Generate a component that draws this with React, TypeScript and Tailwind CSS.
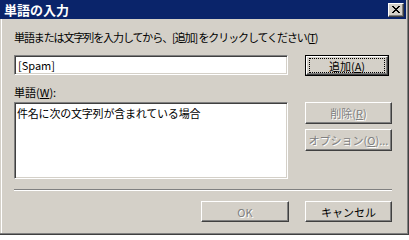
import React from "react"

const font = { fontFamily: '"Noto Sans CJK JP", "Noto Sans", sans-serif' }

// raised 3d edge used by classic buttons
const raised =
  "border border-t-white border-l-white border-r-[#404040] border-b-[#404040] shadow-[inset_-1px_-1px_0_#808080]"

const sunken =
  "border border-t-[#808080] border-l-[#808080] border-r-white border-b-white shadow-[inset_1px_1px_0_#404040,inset_-1px_-1px_0_#d4d0c8]"

const disabledText = "text-[#808080] [text-shadow:1px_1px_0_#ffffff]"

function CloseGlyph() {
  const rows = ["XX....XX", ".XX..XX.", "..XXXX..", "...XX...", "..XXXX..", ".XX..XX.", "XX....XX"]
  return (
    <svg width="8" height="7" viewBox="0 0 8 7" shapeRendering="crispEdges">
      {rows.map((r, y) =>
        r.split("").map((c, x) => (c === "X" ? <rect key={`${x}-${y}`} x={x} y={y} width="1" height="1" fill="#000" /> : null))
      )}
    </svg>
  )
}

function Button({
  children,
  className = "",
  disabled = false,
}: {
  children: React.ReactNode
  className?: string
  disabled?: boolean
}) {
  return (
    <div
      className={`flex items-center justify-center bg-[#d4d0c8] text-[11px] leading-[12px] ${raised} ${
        disabled ? disabledText : "text-black"
      } ${className}`}
    >
      {children}
    </div>
  )
}

export default function App() {
  return (
    <div className="w-[409px] h-[235px] bg-[#d4d0c8] flex flex-col border-r border-b border-[#404040]" style={font}>
      <div className="flex-1 flex flex-col border-r border-b border-[#808080]">
        {/* title bar */}
        <div className="h-[19px] bg-[#0a246a] flex items-center justify-between pl-[4px] pr-[2px] mr-[1px]">
          <span className="text-white font-bold text-[13px] leading-[14px]">単語の入力</span>
          <div className={`w-[16px] h-[14px] bg-[#d4d0c8] flex items-center justify-center ${raised}`}>
            <CloseGlyph />
          </div>
        </div>

        <div className="flex-1 ml-[1px] border-l border-white pl-[12px] pt-[12px] text-[11px] leading-[12px] text-black">
          <div className="tracking-[-1.1px] whitespace-nowrap">
            単語または文字列を入力してから、[追加] をクリックしてください(<span className="underline">T</span>)
          </div>

          <div className="flex mt-[12px] items-start">
            <div className={`w-[274px] h-[20px] bg-white flex items-center pl-[3px] ${sunken}`}>[Spam]</div>
            <div className="ml-[17px] w-[84px] h-[21px] border border-black">
              <Button className="w-full h-full">
                <span className="border border-dotted border-black w-[76px] h-[15px] flex items-center justify-center">
                  追加(<span className="underline">A</span>)
                </span>
              </Button>
            </div>
          </div>

          <div className="mt-[10px]">
            単語(<span className="underline">W</span>):
          </div>

          <div className="flex mt-[4px] items-start">
            <div className={`w-[274px] h-[77px] bg-white pl-[2px] pt-[4px] tracking-[-0.2px] ${sunken}`}>
              件名に次の文字列が含まれている場合
            </div>
            <div className="ml-[17px] flex flex-col gap-[5px]">
              <Button disabled className="w-[87px] h-[22px]">
                削除(<span className="underline">R</span>)
              </Button>
              <Button disabled className="w-[87px] h-[22px]">
                オプション(<span className="underline">O</span>)...
              </Button>
            </div>
          </div>

          <div className="mt-[10px] w-[378px] border-t border-b border-t-[#808080] border-b-white" />

          <div className="mt-[10px] w-[378px] flex justify-end gap-[16px]">
            <Button disabled className="w-[88px] h-[21px]">
              OK
            </Button>
            <Button className="w-[87px] h-[21px]">キャンセル</Button>
          </div>
        </div>
      </div>
    </div>
  )
}
